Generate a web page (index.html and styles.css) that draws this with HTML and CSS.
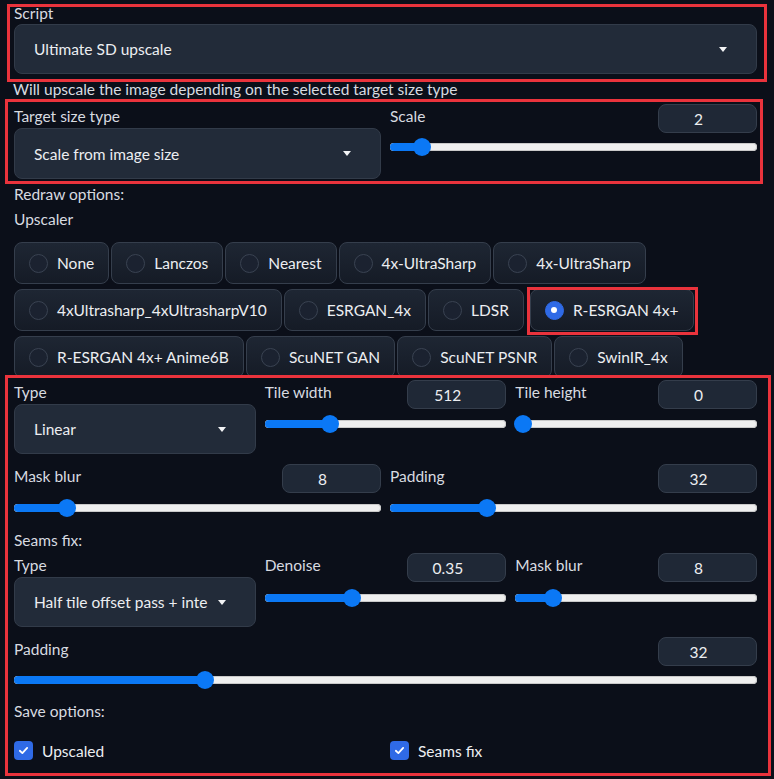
FILE: index.html
```html
<!DOCTYPE html>
<html lang="en">
<head>
<meta charset="utf-8">
<title>Ultimate SD upscale</title>
<link rel="stylesheet" href="styles.css">
</head>
<body>
<div class="page">
  <section class="hl box1">
    <div class="lbl lbl-script">Script</div>
    <div class="dropdown dd-full"><span class="dd-text">Ultimate SD upscale</span><span class="caret"></span></div>
  </section>
  <div class="note">Will upscale the image depending on the selected target size type</div>
  <section class="hl box2">
    <div class="grid2">
      <div class="col">
        <div class="lbl">Target size type</div>
        <div class="dropdown dd-tall"><span class="dd-text">Scale from image size</span><span class="caret"></span></div>
      </div>
      <div class="col">
        <div class="slider-head"><span class="lbl">Scale</span><span class="num">2</span></div>
        <div class="slider s5"><div class="fill" style="width:8.7%"></div><div class="thumb" style="left:8.7%"></div></div>
      </div>
    </div>
  </section>
  <div class="plain redraw">Redraw options:</div>
  <div class="plain upscaler">Upscaler</div>
  <div class="radios">
    <div class="radio-row">
      <div class="rbtn"><span class="circle"></span><span>None</span></div>
      <div class="rbtn"><span class="circle"></span><span>Lanczos</span></div>
      <div class="rbtn"><span class="circle"></span><span>Nearest</span></div>
      <div class="rbtn"><span class="circle"></span><span>4x-UltraSharp</span></div>
      <div class="rbtn"><span class="circle"></span><span>4x-UltraSharp</span></div>
    </div>
    <div class="radio-row">
      <div class="rbtn"><span class="circle"></span><span>4xUltrasharp_4xUltrasharpV10</span></div>
      <div class="rbtn"><span class="circle"></span><span>ESRGAN_4x</span></div>
      <div class="rbtn"><span class="circle"></span><span>LDSR</span></div>
      <div class="rbtn sel"><span class="circle on"></span><span>R-ESRGAN 4x+</span></div>
    </div>
    <div class="radio-row">
      <div class="rbtn"><span class="circle"></span><span>R-ESRGAN 4x+ Anime6B</span></div>
      <div class="rbtn"><span class="circle"></span><span>ScuNET GAN</span></div>
      <div class="rbtn"><span class="circle"></span><span>ScuNET PSNR</span></div>
      <div class="rbtn"><span class="circle"></span><span>SwinIR_4x</span></div>
    </div>
  </div>
  <section class="hl box3">
    <div class="grid3">
      <div class="col">
        <div class="lbl">Type</div>
        <div class="dropdown"><span class="dd-text">Linear</span><span class="caret"></span></div>
      </div>
      <div class="col">
        <div class="slider-head"><span class="lbl">Tile width</span><span class="num">512</span></div>
        <div class="slider"><div class="fill" style="width:27%"></div><div class="thumb" style="left:27%"></div></div>
      </div>
      <div class="col">
        <div class="slider-head"><span class="lbl">Tile height</span><span class="num">0</span></div>
        <div class="slider"><div class="fill" style="width:3.3%"></div><div class="thumb" style="left:3.3%"></div></div>
      </div>
    </div>
    <div class="grid2 row-gap">
      <div class="col">
        <div class="slider-head"><span class="lbl">Mask blur</span><span class="num">8</span></div>
        <div class="slider"><div class="fill" style="width:14.4%"></div><div class="thumb" style="left:14.4%"></div></div>
      </div>
      <div class="col">
        <div class="slider-head"><span class="lbl">Padding</span><span class="num">32</span></div>
        <div class="slider"><div class="fill" style="width:26.4%"></div><div class="thumb" style="left:26.4%"></div></div>
      </div>
    </div>
    <div class="plain section-title">Seams fix:</div>
    <div class="grid3">
      <div class="col">
        <div class="lbl">Type</div>
        <div class="dropdown"><span class="dd-text">Half tile offset pass + inte</span><span class="caret"></span></div>
      </div>
      <div class="col">
        <div class="slider-head"><span class="lbl">Denoise</span><span class="num">0.35</span></div>
        <div class="slider s7"><div class="fill" style="width:36%"></div><div class="thumb" style="left:36%"></div></div>
      </div>
      <div class="col">
        <div class="slider-head"><span class="lbl">Mask blur</span><span class="num">8</span></div>
        <div class="slider s7"><div class="fill" style="width:15.4%"></div><div class="thumb" style="left:15.4%"></div></div>
      </div>
    </div>
    <div class="row-gap pad-row">
      <div class="slider-head"><span class="lbl">Padding</span><span class="num">32</span></div>
      <div class="slider s5"><div class="fill" style="width:25.7%"></div><div class="thumb" style="left:25.7%"></div></div>
    </div>
    <div class="plain save-title">Save options:</div>
    <div class="grid2 checks">
      <label class="check"><span class="box"><svg viewBox="0 0 16 16" width="13" height="13"><path d="M3.5 8.3 L6.6 11.2 L12.5 4.8" fill="none" stroke="#fff" stroke-width="2.2" stroke-linecap="round" stroke-linejoin="round"/></svg></span><span>Upscaled</span></label>
      <label class="check"><span class="box"><svg viewBox="0 0 16 16" width="13" height="13"><path d="M3.5 8.3 L6.6 11.2 L12.5 4.8" fill="none" stroke="#fff" stroke-width="2.2" stroke-linecap="round" stroke-linejoin="round"/></svg></span><span>Seams fix</span></label>
    </div>
  </section>
</div>
</body>
</html>
```
FILE: styles.css
```css
* { box-sizing: border-box; }
html, body { margin: 0; padding: 0; }
body {
  background: #0b0f19;
  color: #e5e7eb;
  font-family: Lato, "Noto Sans", sans-serif;
  font-size: 15.5px;
  width: 774px;
  height: 779px;
  overflow: hidden;
}
.page { padding-top: 4px; }
.hl { border: 3px solid #ea333c; }
.lbl { color: #d8dbe0; line-height: 24px; white-space: nowrap; }
.plain { color: #d8dbe0; margin-left: 14px; }

.box1 { margin-left: 7px; width: 760px; padding: 0 7px 5px 4px; }
.lbl-script { line-height: 12px; margin-bottom: 5px; }
.note { margin-left: 13px; line-height: 14px; padding-bottom: 3px; color: #d8dbe0; white-space: nowrap; }
.box2 { margin-left: 5px; width: 758px; padding: 2px 3px 2px 6px; }

.grid2 { display: grid; grid-template-columns: 1fr 1fr; column-gap: 9px; }
.grid3 { display: grid; grid-template-columns: 1fr 1fr 1fr; column-gap: 9px; }
.col { min-width: 0; }
.row-gap { margin-top: 10px; }

.dropdown {
  height: 50px;
  background: #222b39;
  border: 1px solid #323b49;
  border-radius: 8px;
  display: flex;
  align-items: center;
  gap: 6px;
  padding-left: 19px;
  color: #eceef1;
}
.dd-tall { height: 51px; }
.dd-text { flex: none; white-space: nowrap; }
.caret {
  width: 0; height: 0;
  border-left: 4.5px solid transparent;
  border-right: 4.5px solid transparent;
  border-top: 5px solid #f2f3f5;
  margin: 0 29px 0 auto;
  flex: none;
}

.slider-head { display: flex; justify-content: space-between; align-items: flex-start; height: 29px; }
.num {
  width: 99px; height: 29px;
  background: #1f2836;
  border: 1px solid #343d4b;
  border-radius: 8px;
  display: flex; align-items: center; justify-content: center;
  padding-right: 18px;
  color: #eceef1;
}
.slider { position: relative; height: 18px; margin-top: 6px; }
.s5 { margin-top: 5px; }
.s7 { margin-top: 7px; }
.slider::before {
  content: "";
  position: absolute; left: 0; right: 0; top: 5px; height: 8px;
  background: #efefef;
  border-radius: 4px;
  box-shadow: inset 0 0 0 1px #c9c9c9;
}
.fill { position: absolute; left: 0; top: 5px; height: 8px; background: #0b78f5; border-radius: 4px 0 0 4px; }
.thumb { position: absolute; top: 0; width: 18px; height: 18px; margin-left: -9px; border-radius: 50%; background: #0b78f5; }

.redraw { line-height: 20px; }
.upscaler { margin-top: 3px; line-height: 24px; }
.radios { margin: 11px 0 0 14px; display: flex; flex-direction: column; gap: 5px; }
.radio-row { display: flex; gap: 2px; }
.rbtn {
  height: 42px;
  display: flex; align-items: center; gap: 9px;
  padding: 0 14px 0 14px;
  border: 1px solid #353e4c;
  border-radius: 8px;
  background: linear-gradient(#1e2633, #151b26);
  color: #eceef1;
  white-space: nowrap;
}
.circle {
  width: 19px; height: 19px; flex: none;
  border-radius: 50%;
  border: 1px solid #3a4352;
  background: #1b2230;
}
.circle.on { background: #2f6ae6; border-color: #2f6ae6; position: relative; }
.circle.on::after {
  content: ""; position: absolute; left: 5.5px; top: 5.5px; width: 6px; height: 6px; border-radius: 50%; background: #fff;
}
.sel { margin-left: 4px; position: relative; }
.sel::after {
  content: "";
  position: absolute; left: -4px; right: -5px; top: -3px; bottom: -5px;
  border: 3px solid #ea333c;
}

.box3 { position: relative; margin-top: -3px; margin-left: 5px; width: 766px; padding: 2px 11px 13px 6px; }
.box3 .plain { margin-left: 0; }
.section-title { margin-top: 10px; line-height: 26px; }
.save-title { margin-top: 9px; line-height: 26px; }
.checks { margin-top: 17px; }
.check { display: flex; align-items: center; gap: 9px; height: 19px; color: #eceef1; }
.box {
  width: 19px; height: 19px; border-radius: 4px; background: #2f6ae6;
  display: flex; align-items: center; justify-content: center; flex: none;
}
```
